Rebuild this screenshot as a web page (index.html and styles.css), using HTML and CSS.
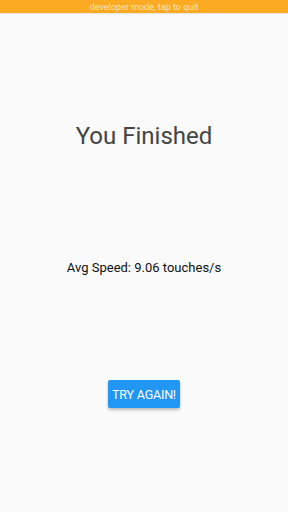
FILE: index.html
```html
<!DOCTYPE html>
<html>
<head>
<meta charset="utf-8">
<link rel="stylesheet" href="styles.css">
</head>
<body>
<div class="bar">developer mode, tap to quit</div>
<main class="content">
  <h1 class="title">You Finished</h1>
  <p class="speed">Avg Speed: 9.06 touches/s</p>
  <button class="btn">TRY AGAIN!</button>
</main>
</body>
</html>
```
FILE: styles.css
```css
html, body { margin: 0; padding: 0; }
body {
  width: 288px; height: 512px;
  background: #fafafa;
  font-family: Roboto, "Liberation Sans", sans-serif;
  display: flex; flex-direction: column;
}
.bar {
  height: 13px;
  background: #fbaa22;
  color: #fde4b8;
  font-size: 9px;
  line-height: 14px;
  text-align: center;
  box-shadow: 0 1px 1px rgba(0,0,0,0.08);
}
.content {
  display: flex; flex-direction: column; align-items: center;
}
.title {
  margin: 107px 0 0;
  font-weight: 400;
  font-size: 24px;
  line-height: 32px;
  color: #444;
}
.speed {
  margin: 106px 0 0;
  font-size: 13px;
  line-height: 20px;
  color: #111;
}
.btn {
  margin-top: 102px;
  width: 72px; height: 28px;
  background: #2196f3;
  color: #fff;
  border: none;
  border-radius: 2px;
  font-family: Roboto, "Liberation Sans", sans-serif;
  font-weight: 400;
  font-size: 12.5px;
  letter-spacing: -0.2px;
  padding: 0;
  box-shadow: 0 2px 3px rgba(0,0,0,0.25);
}
```
